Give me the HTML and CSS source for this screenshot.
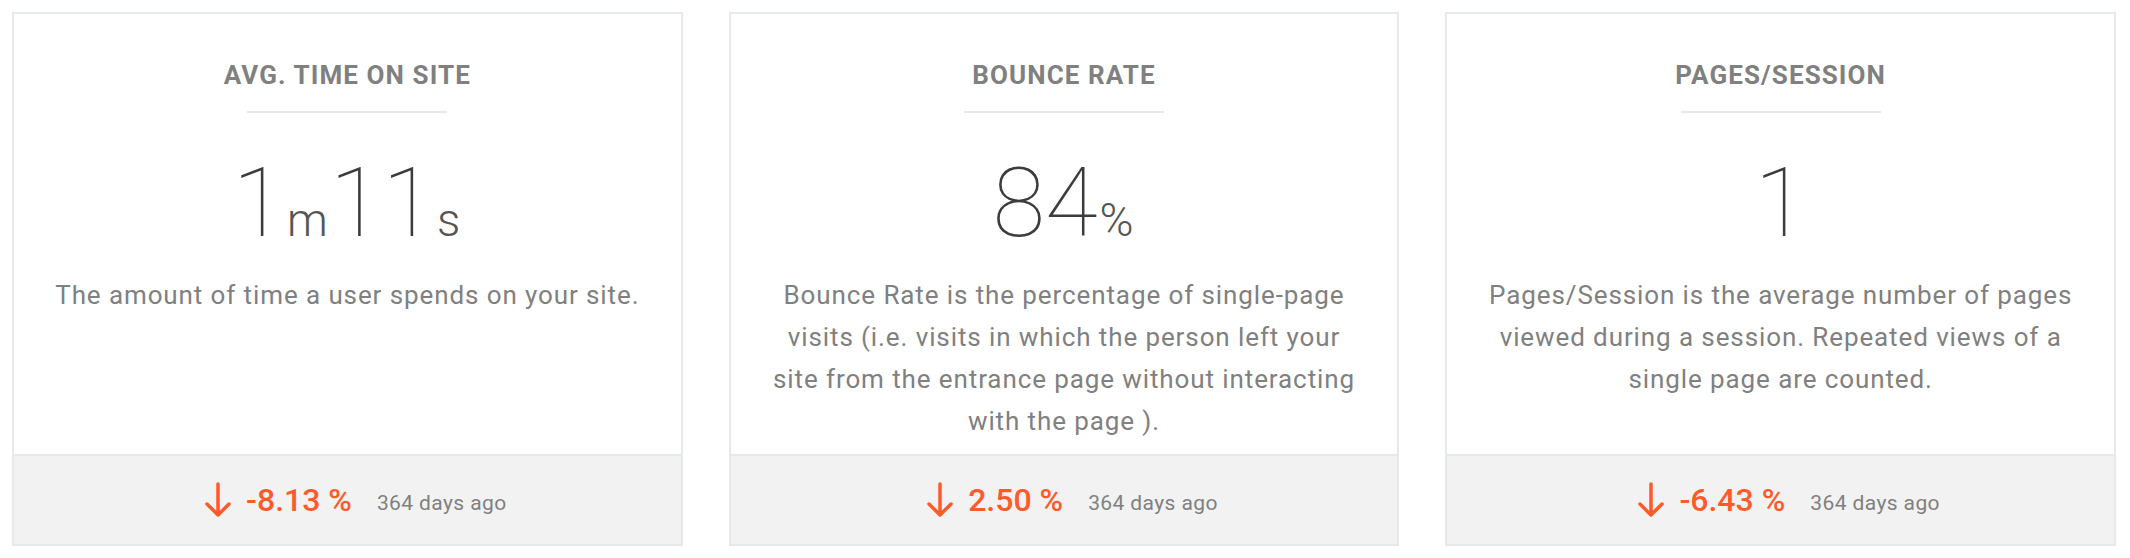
FILE: index.html
```html
<!DOCTYPE html>
<html lang="en">
<head>
    <meta charset="UTF-8">
    <meta name="viewport" content="width=device-width, initial-scale=1.0">
    <title>Site metrics</title>
    <link rel="stylesheet" href="styles.css">
</head>
<body>
    <div class="stats-row">

        <div class="stat-card">
            <div class="stat-body">
                <h3 class="stat-title">Avg. Time on Site</h3>
                <div class="stat-divider"></div>
                <div class="stat-value">1<span class="unit">m</span>11<span class="unit">s</span></div>
                <p class="stat-desc">The amount of time a user spends on your site.</p>
            </div>
            <div class="stat-footer">
                <span class="trend down">
                    <svg class="trend-icon" viewBox="0 0 28 36" width="28" height="36">
                        <path d="M14 2 V33 M3 22 L14 33 L25 22" fill="none" stroke="currentColor" stroke-width="3.5" stroke-linecap="round" stroke-linejoin="round"/>
                    </svg>
                    -8.13 %
                </span>
                <span class="since">364 days ago</span>
            </div>
        </div>

        <div class="stat-card">
            <div class="stat-body">
                <h3 class="stat-title">Bounce Rate</h3>
                <div class="stat-divider"></div>
                <div class="stat-value">84<span class="unit">%</span></div>
                <p class="stat-desc">Bounce Rate is the percentage of single-page visits (i.e. visits in which the person left your site from the entrance page without interacting with the page ).</p>
            </div>
            <div class="stat-footer">
                <span class="trend down">
                    <svg class="trend-icon" viewBox="0 0 28 36" width="28" height="36">
                        <path d="M14 2 V33 M3 22 L14 33 L25 22" fill="none" stroke="currentColor" stroke-width="3.5" stroke-linecap="round" stroke-linejoin="round"/>
                    </svg>
                    2.50 %
                </span>
                <span class="since">364 days ago</span>
            </div>
        </div>

        <div class="stat-card">
            <div class="stat-body">
                <h3 class="stat-title">Pages/Session</h3>
                <div class="stat-divider"></div>
                <div class="stat-value">1</div>
                <p class="stat-desc">Pages/Session is the average number of pages viewed during a session. Repeated views of a single page are counted.</p>
            </div>
            <div class="stat-footer">
                <span class="trend down">
                    <svg class="trend-icon" viewBox="0 0 28 36" width="28" height="36">
                        <path d="M14 2 V33 M3 22 L14 33 L25 22" fill="none" stroke="currentColor" stroke-width="3.5" stroke-linecap="round" stroke-linejoin="round"/>
                    </svg>
                    -6.43 %
                </span>
                <span class="since">364 days ago</span>
            </div>
        </div>

    </div>
</body>
</html>
```

FILE: styles.css
```css
body {
    margin: 0;
    font-family: Roboto, "Liberation Sans", Arial, sans-serif;
    background-color: #ffffff;
    color: #808080;
}
.stats-row {
    display: flex;
    gap: 46px;
    padding: 12px 14px 12px 12px;
}
.stat-card {
    flex: 1;
    display: flex;
    flex-direction: column;
    height: 530px;
    border: 2px solid #e6e9ec;
    background-color: #fff;
}
.stat-body {
    flex: 1;
    display: flex;
    flex-direction: column;
    align-items: center;
    padding: 46px 35px 0;
    text-align: center;
}
.stat-title {
    margin: 0;
    font-size: 26px;
    line-height: 30px;
    font-weight: 700;
    letter-spacing: 1.1px;
    text-transform: uppercase;
    color: #808080;
}
.stat-divider {
    width: 200px;
    height: 2px;
    margin-top: 21px;
    background-color: #e6e9ec;
}
.stat-value {
    margin-top: 42px;
    font-size: 96px;
    line-height: 96px;
    font-weight: 100;
    color: #3c3c3c;
}
.stat-value .unit {
    margin: 0 2px;
    font-size: 46px;
    line-height: 1;
    font-weight: 300;
    color: #555;
}
.stat-desc {
    margin: 23px 0 0;
    font-size: 26px;
    line-height: 42px;
    letter-spacing: 0.9px;
    color: #808080;
}
.stat-footer {
    height: 88px;
    display: flex;
    align-items: center;
    justify-content: center;
    gap: 25px;
    padding-left: 16px;
    border-top: 2px solid #e6e9ec;
    background-color: #f2f2f2;
}
.trend {
    display: flex;
    align-items: center;
    gap: 14px;
    font-size: 32px;
    font-weight: 500;
}
.trend.down {
    color: #ff5a2a;
}
.trend-icon {
    display: block;
}
.since {
    font-size: 21px;
    letter-spacing: 0.4px;
    color: #808080;
    padding-top: 6px;
}
```
